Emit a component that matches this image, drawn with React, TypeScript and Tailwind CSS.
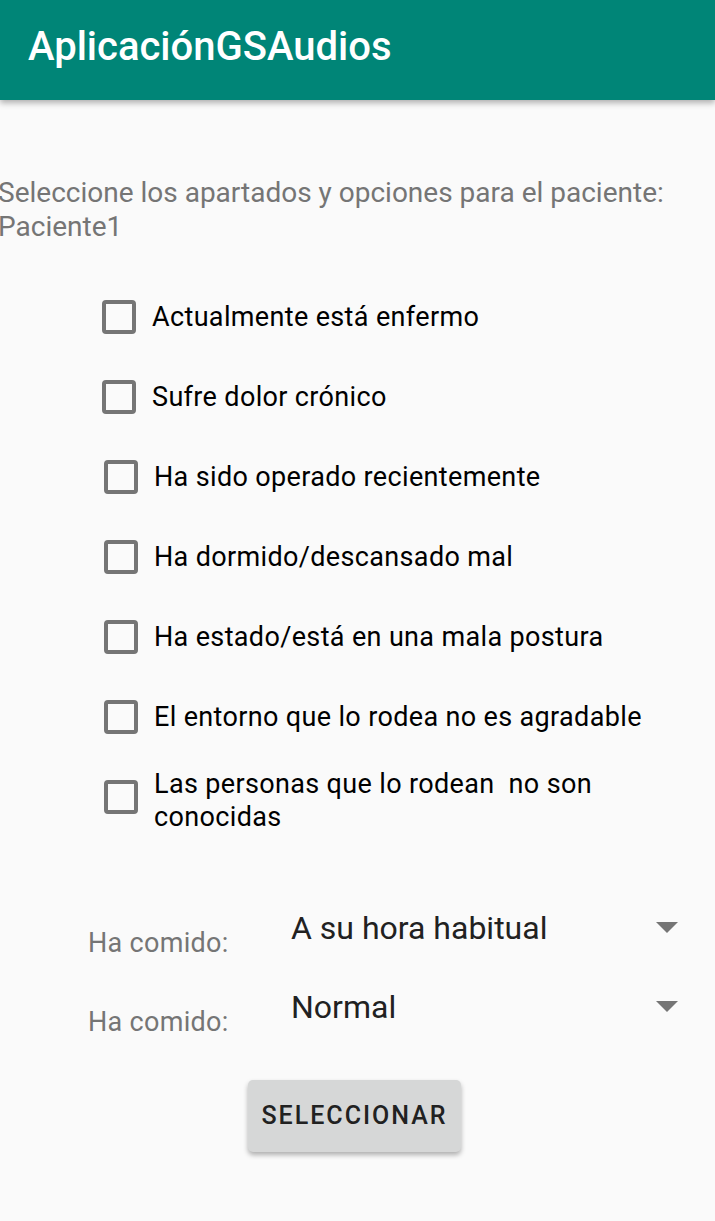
const options = [
  { label: "Actualmente está enfermo", shift: false },
  { label: "Sufre dolor crónico", shift: false },
  { label: "Ha sido operado recientemente", shift: true },
  { label: "Ha dormido/descansado mal", shift: true },
  { label: "Ha estado/está en una mala postura", shift: true },
  { label: "El entorno que lo rodea no es agradable", shift: true },
  { label: "Las personas que lo rodean\u00a0 no son conocidas", shift: true },
];

const spinners = [
  { label: "Ha comido:", value: "A su hora habitual" },
  { label: "Ha comido:", value: "Normal" },
];

const Caret = () => (
  <svg width="22" height="12" viewBox="0 0 22 12" className="mt-[32px]">
    <path d="M0 0 L22 0 L11 11 Z" fill="#757575" />
  </svg>
);

export default function App() {
  return (
    <div className="w-[715px] h-[1221px] bg-[#fafafa] overflow-hidden font-['Roboto',sans-serif]">
      {/* App bar */}
      <div className="h-[100px] bg-[#008577] flex items-center px-[28px] shadow-[0_3px_6px_rgba(0,0,0,0.3)] relative z-10">
        <h1 className="text-white text-[40px] font-medium leading-none -mt-[6px]">
          AplicaciónGSAudios
        </h1>
      </div>

      {/* Subtitle */}
      <div className="mt-[76px] -ml-[2px] text-[#757575] text-[28px] leading-[34px] whitespace-nowrap">
        <p>Seleccione los apartados y opciones para el paciente:</p>
        <p>Paciente1</p>
      </div>

      {/* Checkboxes */}
      <div className="mt-[33px] flex flex-col">
        {options.map((o, i) => (
          <div key={i} className={`h-[80px] flex items-center ${o.shift ? "pl-[104px]" : "pl-[102px]"}`}>
            <span className="w-[34px] h-[34px] shrink-0 border-[4px] border-[#757575] rounded-[4px]" />
            <span
              className={`ml-[16px] w-[500px] text-black text-[27px] leading-[33px] tracking-[0.35px] ${
                i === options.length - 1 ? "mt-[8px]" : ""
              }`}
            >
              {o.label}
            </span>
          </div>
        ))}
      </div>

      {/* Spinners */}
      <div className="mt-[53px] flex flex-col">
        {spinners.map((s, i) => (
          <div key={i} className="h-[79px] flex items-start pl-[88px] pr-[37px]">
            <span className="w-[203px] mt-[37px] text-[#757575] text-[27px] leading-[32px] tracking-[0.3px] whitespace-nowrap">{s.label}</span>
            <span className="flex-1 mt-[18px] text-[#212121] text-[32px] leading-[40px]">{s.value}</span>
            <Caret />
          </div>
        ))}
      </div>

      {/* Button */}
      <div className="mt-[32px] pl-[248px]">
        <button className="w-[213px] h-[72px] bg-[#d6d7d7] rounded-[5px] shadow-[0_3px_5px_rgba(0,0,0,0.3)] text-[#212121] text-[25px] font-medium tracking-[2px]">
          SELECCIONAR
        </button>
      </div>
    </div>
  );
}
